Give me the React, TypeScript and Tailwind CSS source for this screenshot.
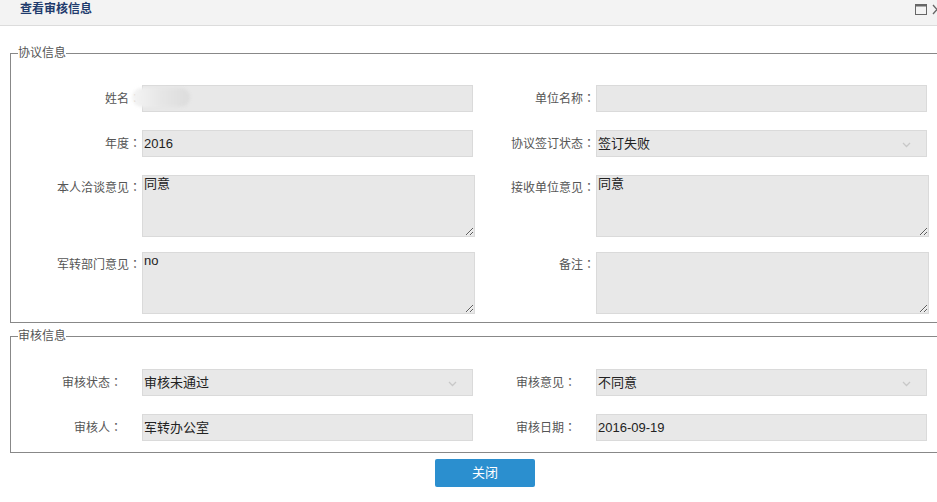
import React from "react";

const FONT = { fontFamily: '"Liberation Sans", "Noto Sans CJK SC", Arial, sans-serif' };
const JP = { fontFamily: '"Noto Sans CJK JP", sans-serif' };

function Chevron() {
  return (
    <svg width="9" height="6" viewBox="0 0 9 6" className="absolute right-[15px] top-[11px]">
      <path d="M1 1 L4.5 4.5 L8 1" fill="none" stroke="#c8c8c8" strokeWidth="1.3" />
    </svg>
  );
}

function Field({ value, select }: { value?: string; select?: boolean }) {
  return (
    <div className="relative h-[27px] w-[331px] border border-[#dadada] bg-[#e8e8e8] pl-[1px] text-[13px] leading-[25px] text-[#222]">
      {value}
      {select && <Chevron />}
    </div>
  );
}

function Area({ value }: { value?: string }) {
  return (
    <textarea
      readOnly
      value={value ?? ""}
      className="block h-[62px] w-[333px] resize border border-[#dadada] bg-[#e8e8e8] pl-[1px] pt-0 text-[13px] leading-[16px] text-[#222] outline-none"
      style={FONT}
    />
  );
}

function Text({ t }: { t: string }) {
  return (
    <>
      {t}
      <span style={JP}>：</span>
    </>
  );
}

function Label({ t, top }: { t: string; top?: boolean }) {
  return (
    <div
      className={
        "pr-[1px] text-right text-[12px] text-[#555] " +
        (top ? "self-start pt-[3px] leading-[18px]" : "self-center leading-[18px]")
      }
    >
      <Text t={t} />
    </div>
  );
}

function Label2({ t }: { t: string }) {
  return (
    <div className="self-center pr-[20px] text-right text-[12px] leading-[18px] text-[#555]">
      <Text t={t} />
    </div>
  );
}

const COLS = "grid grid-cols-[131px_333px_121px_333px]";

export default function App() {
  return (
    <div className="h-[502px] w-[937px] overflow-hidden bg-white" style={FONT}>
      <div className="w-[970px]">
        {/* header */}
        <div className="flex h-[26px] items-center justify-between border-b border-[#dcdcdc] bg-[#f3f3f3]">
          <div className="-mt-[8px] pl-[20px] text-[12px] font-bold leading-[18px] text-[#1f3b6d]">查看审核信息</div>
          <div className="-mt-[6px] flex items-center gap-[5px] pr-[28px]">
            <svg width="12" height="11" viewBox="0 0 12 11">
              <rect x="0.5" y="0.5" width="11" height="10" fill="none" stroke="#666" strokeWidth="1" />
              <rect x="0.5" y="0.5" width="11" height="2" fill="#666" />
            </svg>
            <svg width="10" height="11" viewBox="0 0 10 11">
              <path d="M1 1 L9 10 M9 1 L1 10" stroke="#666" strokeWidth="1.3" />
            </svg>
          </div>
        </div>

        {/* fieldset 1 */}
        <fieldset className="ml-[10px] mt-[18px] w-[950px] border border-[#888] pb-[8px] pt-[23px]">
          <legend className="ml-[7px] p-0 text-[12px] leading-[18px] text-[#555]">协议信息</legend>
          <div className={COLS + " gap-y-[18px]"}>
            <div className="relative self-center">
              <Label t="姓名" />
              <div className="absolute left-[121px] top-[-1px] z-10 h-[19px] w-[58px] rounded-full bg-gradient-to-r from-[#f4f4f4] via-[#e6e6e6] to-[#dcdcdc] blur-[1.5px]" />
            </div>
            <Field />
            <Label t="单位名称" />
            <Field />

            <Label t="年度" />
            <Field value="2016" />
            <Label t="协议签订状态" />
            <Field value="签订失败" select />

            <Label t="本人洽谈意见" top />
            <Area value="同意" />
            <Label t="接收单位意见" top />
            <Area value="同意" />
          </div>
          <div className={COLS + " mt-[15px]"}>
            <Label t="军转部门意见" top />
            <Area value="no" />
            <Label t="备注" top />
            <Area />
          </div>
        </fieldset>

        {/* fieldset 2 */}
        <fieldset className="ml-[10px] mt-[4px] w-[950px] border border-[#888] pb-[11px] pt-[24px]">
          <legend className="ml-[7px] p-0 text-[12px] leading-[18px] text-[#555]">审核信息</legend>
          <div className={COLS + " gap-y-[18px]"}>
            <Label2 t="审核状态" />
            <Field value="审核未通过" select />
            <Label2 t="审核意见" />
            <Field value="不同意" select />

            <Label2 t="审核人" />
            <Field value="军转办公室" />
            <Label2 t="审核日期" />
            <Field value="2016-09-19" />
          </div>
        </fieldset>

        <div className="mt-[6px] flex justify-center">
          <button className="h-[28px] w-[100px] rounded-[2px] bg-[#2b8fcf] text-[13px] text-white">关闭</button>
        </div>
      </div>
    </div>
  );
}
